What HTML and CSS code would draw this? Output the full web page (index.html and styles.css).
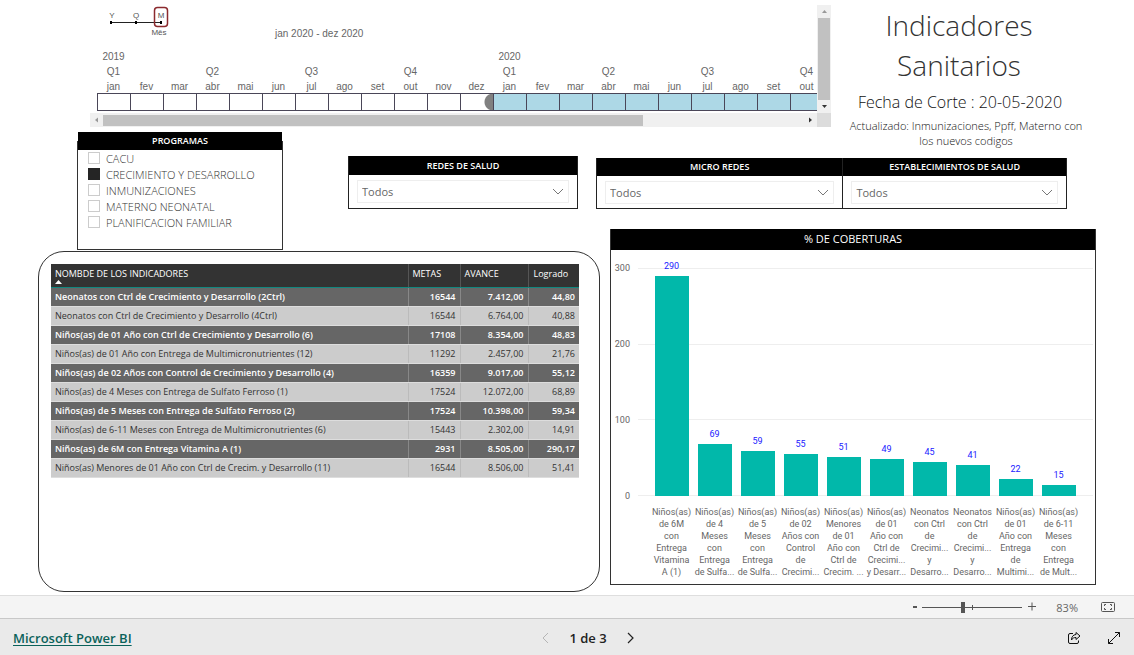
FILE: index.html
```html
<!DOCTYPE html>
<html lang="es">
<head>
<meta charset="utf-8">
<title>Indicadores Sanitarios</title>
<link rel="stylesheet" href="styles.css">
</head>
<body>
<main class="report">
  <section class="timeline">
    <div class="timeline-view">
      <div class="timeline-head">
        <svg class="granularity" width="70" height="36" viewBox="0 0 70 36">
          <path d="M14 17.5H64" stroke="#222" fill="none"/>
          <path d="M13 16h2v3h-2zM38 16h2v3h-2zM63 16h2v3h-2z" fill="#000"/>
          <text x="15" y="13" text-anchor="middle">Y</text>
          <text x="39" y="13" text-anchor="middle">Q</text>
          <text x="64" y="13" text-anchor="middle">M</text>
          <rect x="57.500" y="2.500" width="13" height="19" rx="3" fill="none" stroke="#8b2a2e" stroke-width="1.500"/>
          <text x="62" y="30" text-anchor="middle">Mês</text>
        </svg>
        <span class="range">jan 2020 - dez 2020</span>
      </div>
      <div class="months">
        <div class="month"><span>2019</span><span>Q1</span><span>jan</span><i></i></div>
        <div class="month"><span></span><span></span><span>fev</span><i></i></div>
        <div class="month"><span></span><span></span><span>mar</span><i></i></div>
        <div class="month"><span></span><span>Q2</span><span>abr</span><i></i></div>
        <div class="month"><span></span><span></span><span>mai</span><i></i></div>
        <div class="month"><span></span><span></span><span>jun</span><i></i></div>
        <div class="month"><span></span><span>Q3</span><span>jul</span><i></i></div>
        <div class="month"><span></span><span></span><span>ago</span><i></i></div>
        <div class="month"><span></span><span></span><span>set</span><i></i></div>
        <div class="month"><span></span><span>Q4</span><span>out</span><i></i></div>
        <div class="month"><span></span><span></span><span>nov</span><i></i></div>
        <div class="month"><span></span><span></span><span>dez</span><i class="handle"></i></div>
        <div class="month on"><span>2020</span><span>Q1</span><span>jan</span><i></i></div>
        <div class="month on"><span></span><span></span><span>fev</span><i></i></div>
        <div class="month on"><span></span><span></span><span>mar</span><i></i></div>
        <div class="month on"><span></span><span>Q2</span><span>abr</span><i></i></div>
        <div class="month on"><span></span><span></span><span>mai</span><i></i></div>
        <div class="month on"><span></span><span></span><span>jun</span><i></i></div>
        <div class="month on"><span></span><span>Q3</span><span>jul</span><i></i></div>
        <div class="month on"><span></span><span></span><span>ago</span><i></i></div>
        <div class="month on"><span></span><span></span><span>set</span><i></i></div>
        <div class="month on"><span></span><span>Q4</span><span>out</span><i></i></div>
      </div>
    </div>
    <div class="scroll-y">
      <svg width="13" height="13" viewBox="0 0 13 13"><path d="M4 8h5L6.500 5z" fill="#999"/></svg>
      <div class="thumb"></div>
      <svg width="13" height="13" viewBox="0 0 13 13"><path d="M4 5h5L6.500 8z" fill="#333"/></svg>
    </div>
    <div class="scroll-x">
      <svg width="13" height="14" viewBox="0 0 13 14"><path d="M8 4.500v5L5 7z" fill="#999"/></svg>
      <div class="track"><div class="thumb"></div></div>
      <svg width="13" height="14" viewBox="0 0 13 14"><path d="M5 4.500v5L8 7z" fill="#333"/></svg>
    </div>
    <div class="corner"></div>
  </section>

  <header class="heading">
    <h1>Indicadores<br>Sanitarios</h1>
    <p class="cut">Fecha de Corte : 20-05-2020</p>
    <p class="updated">Actualizado: Inmunizaciones, Ppff, Materno con<br>los nuevos codigos</p>
  </header>

  <fieldset class="programs">
    <legend class="bar">PROGRAMAS</legend>
    <label><input type="checkbox">CACU</label>
    <label><input type="checkbox" checked>CRECIMIENTO Y DESARROLLO</label>
    <label><input type="checkbox">INMUNIZACIONES</label>
    <label><input type="checkbox">MATERNO NEONATAL</label>
    <label><input type="checkbox">PLANIFICACION FAMILIAR</label>
  </fieldset>

  <div class="slicer redes">
    <label class="bar" for="redes">REDES DE SALUD</label>
    <div class="pick">
      <select id="redes"><option>Todos</option></select>
      <svg width="12" height="8" viewBox="0 0 12 8"><path d="M1 1l5 5 5-5" fill="none" stroke="#777"/></svg>
    </div>
  </div>
  <div class="pair">
    <div class="slicer micro">
      <label class="bar" for="micro">MICRO REDES</label>
      <div class="pick">
        <select id="micro"><option>Todos</option></select>
        <svg width="12" height="8" viewBox="0 0 12 8"><path d="M1 1l5 5 5-5" fill="none" stroke="#777"/></svg>
      </div>
    </div>
    <div class="slicer estab">
      <label class="bar" for="estab">ESTABLECIMIENTOS DE SALUD</label>
      <div class="pick">
        <select id="estab"><option>Todos</option></select>
        <svg width="12" height="8" viewBox="0 0 12 8"><path d="M1 1l5 5 5-5" fill="none" stroke="#777"/></svg>
      </div>
    </div>
  </div>

  <section class="card">
    <table>
      <colgroup><col><col class="c-metas"><col class="c-avance"><col class="c-logrado"></colgroup>
      <thead>
        <tr>
          <th>NOMBDE DE LOS INDICADORES<svg class="sort" width="8" height="4" viewBox="0 0 8 4"><path d="M0 4h7L3.500 0z" fill="#fff"/></svg></th>
          <th>METAS</th><th>AVANCE</th><th>Logrado</th>
        </tr>
      </thead>
      <tbody>
        <tr><td>Neonatos con Ctrl de Crecimiento y Desarrollo (2Ctrl)</td><td>16544</td><td>7.412,00</td><td>44,80</td></tr>
        <tr><td>Neonatos con Ctrl de Crecimiento y Desarrollo (4Ctrl)</td><td>16544</td><td>6.764,00</td><td>40,88</td></tr>
        <tr><td>Niños(as) de 01 Año con Ctrl de Crecimiento y Desarrollo (6)</td><td>17108</td><td>8.354,00</td><td>48,83</td></tr>
        <tr><td>Niños(as) de 01 Año con Entrega de Multimicronutrientes (12)</td><td>11292</td><td>2.457,00</td><td>21,76</td></tr>
        <tr><td>Niños(as) de 02 Años con Control de Crecimiento y Desarrollo (4)</td><td>16359</td><td>9.017,00</td><td>55,12</td></tr>
        <tr><td>Niños(as) de 4 Meses con Entrega de Sulfato Ferroso (1)</td><td>17524</td><td>12.072,00</td><td>68,89</td></tr>
        <tr><td>Niños(as) de 5 Meses con Entrega de Sulfato Ferroso (2)</td><td>17524</td><td>10.398,00</td><td>59,34</td></tr>
        <tr><td>Niños(as) de 6-11 Meses con Entrega de Multimicronutrientes (6)</td><td>15443</td><td>2.302,00</td><td>14,91</td></tr>
        <tr><td>Niños(as) de 6M con Entrega Vitamina A (1)</td><td>2931</td><td>8.505,00</td><td>290,17</td></tr>
        <tr><td>Niños(as) Menores de 01 Año con Ctrl de Crecim. y Desarrollo (11)</td><td>16544</td><td>8.506,00</td><td>51,41</td></tr>
      </tbody>
    </table>
  </section>

  <section class="chart">
    <h2 class="bar">% DE COBERTURAS</h2>
    <div class="chart-body">
      <div class="axis"><span>300</span><span>200</span><span>100</span><span>0</span></div>
      <div class="grid-lines"><i></i><i></i><i></i></div>
      <div class="bars">
        <div class="col"><b>290</b><i style="height:96.7%"></i></div>
        <div class="col"><b>69</b><i style="height:23%"></i></div>
        <div class="col"><b>59</b><i style="height:19.8%"></i></div>
        <div class="col"><b>55</b><i style="height:18.4%"></i></div>
        <div class="col"><b>51</b><i style="height:17.1%"></i></div>
        <div class="col"><b>49</b><i style="height:16.3%"></i></div>
        <div class="col"><b>45</b><i style="height:14.9%"></i></div>
        <div class="col"><b>41</b><i style="height:13.6%"></i></div>
        <div class="col"><b>22</b><i style="height:7.3%"></i></div>
        <div class="col"><b>15</b><i style="height:5%"></i></div>
      </div>
      <div class="names">
        <span>Niños(as)<br>de 6M<br>con<br>Entrega<br>Vitamina<br>A (1)</span>
        <span>Niños(as)<br>de 4<br>Meses<br>con<br>Entrega<br>de Sulfa...</span>
        <span>Niños(as)<br>de 5<br>Meses<br>con<br>Entrega<br>de Sulfa...</span>
        <span>Niños(as)<br>de 02<br>Años con<br>Control<br>de<br>Crecimi...</span>
        <span>Niños(as)<br>Menores<br>de 01<br>Año con<br>Ctrl de<br>Crecim. ...</span>
        <span>Niños(as)<br>de 01<br>Año con<br>Ctrl de<br>Crecimi...<br>y Desarr...</span>
        <span>Neonatos<br>con Ctrl<br>de<br>Crecimi...<br>y<br>Desarro...</span>
        <span>Neonatos<br>con Ctrl<br>de<br>Crecimi...<br>y<br>Desarro...</span>
        <span>Niños(as)<br>de 01<br>Año con<br>Entrega<br>de<br>Multimi...</span>
        <span>Niños(as)<br>de 6-11<br>Meses<br>con<br>Entrega<br>de Mult...</span>
      </div>
    </div>
  </section>
</main>

<div class="zoom-bar">
  <button type="button" aria-label="Alejar"><svg width="6" height="12" viewBox="0 0 6 12"><path d="M1 6h4" stroke="#555" stroke-width="2"/></svg></button>
  <input type="range" min="10" max="150" value="67" aria-label="Zoom">
  <button type="button" aria-label="Acercar"><svg width="8" height="12" viewBox="0 0 8 12"><path d="M0 5.500h8M4 1.500v8" stroke="#555"/></svg></button>
  <span class="percent">83%</span>
  <button type="button" aria-label="Ajustar a la página"><svg width="14" height="10" viewBox="0 0 14 10" fill="none" stroke="#555"><rect x=".5" y=".5" width="13" height="9" rx="1"/><path d="M3.500 4V2.500H5M9 2.500h1.500V4M10.500 6v1.500H9M5 7.500H3.500V6"/></svg></button>
</div>

<footer class="footer">
  <a href="#">Microsoft Power BI</a>
  <nav class="pager">
    <button type="button" aria-label="Anterior" disabled><svg width="7" height="12" viewBox="0 0 7 12"><path d="M6 1L1 6l5 5" fill="none" stroke="#b5b5b5"/></svg></button>
    <span>1 de 3</span>
    <button type="button" aria-label="Siguiente"><svg width="7" height="12" viewBox="0 0 7 12"><path d="M1 1l5 5-5 5" fill="none" stroke="#222" stroke-width="1.200"/></svg></button>
  </nav>
  <div class="actions">
    <button type="button" aria-label="Compartir"><svg width="14" height="14" viewBox="0 0 14 14" fill="none" stroke="#111" stroke-linejoin="round"><path d="M6 2.500H3A1.500 1.500 0 0 0 1.500 4v7A1.500 1.500 0 0 0 3 12.500h7a1.500 1.500 0 0 0 1.500-1.500V9.500"/><path d="M9 1.500l4 3.500-4 3.500V6.500C7 6.500 5.500 7 4.500 9 4.500 6 6 3.700 9 3.500z"/></svg></button>
    <button type="button" aria-label="Pantalla completa"><svg width="14" height="14" viewBox="0 0 14 14" fill="none" stroke="#111"><path d="M1.500 12.500l11-11M8 1.500h4.500V6M1.500 8v4.500H6"/></svg></button>
  </div>
</footer>
</body>
</html>
```
FILE: styles.css
```css
* { box-sizing: border-box; }

body {
  margin: 0;
  min-height: 100vh;
  display: flex;
  flex-direction: column;
  background: #fff;
  color: #333;
  font-family: "Open Sans", "Noto Sans", sans-serif;
  font-size: 9px;
}

h1, h2, p { margin: 0; font-weight: 400; }
button { border: 0; padding: 0; background: none; display: flex; align-items: center; }
svg { display: block; }

.report {
  flex: 1;
  display: grid;
  grid-template-columns: 310fr 248fr 244fr 256fr;
  grid-template-rows: 132px 24px 73px 22px 1fr;
  padding: 0 38px;
}

.bar {
  display: block;
  height: 18px;
  line-height: 18px;
  background: #000;
  color: #fff;
  text-align: center;
}

/* Timeline */
.timeline {
  grid-area: 1 / 1 / 2 / 4;
  display: grid;
  grid-template-columns: minmax(0, 1fr) 14px;
  grid-template-rows: 108px 14px;
  margin: 5px 9px 0 52px;
  font-family: "Liberation Sans", Arial, sans-serif;
  font-size: 10px;
  color: #666;
}
.timeline-view { overflow: hidden; padding-left: 7px; }
.timeline-head { display: flex; height: 43px; }
.granularity { overflow: visible; font-size: 8px; fill: #555; }
.range { margin: 23px 0 0 108px; line-height: 12px; }
.months { display: flex; }
.month { flex: 0 0 33px; text-align: center; }
.month span { display: block; height: 15px; line-height: 17px; }
.month i {
  display: block;
  height: 18px;
  border: 1px solid #4a4658;
  border-right: 0;
}
.month.on i { background: #add8e6; }
.month .handle { background: radial-gradient(circle at 100% 50%, #808080 8px, transparent 9px); }
.scroll-y, .scroll-x { background: #f0f0f0; display: flex; }
.scroll-y { flex-direction: column; padding: 0 1px; }
.scroll-y .thumb { flex: 1; background: #c1c1c1; }
.scroll-x .track { flex: 1; padding: 2px 0 1px; }
.scroll-x .thumb { width: 77%; height: 11px; background: #c1c1c1; }
.corner { background: #dcdcdc; }

/* Heading */
.heading { grid-area: 1 / 4 / 3 / 5; text-align: center; white-space: nowrap; }
.heading h1 { padding: 5px 18px 0 0; font-size: 28px; line-height: 40px; font-weight: 300; }
.heading .cut { padding: 5px 16px 0 0; font-size: 16px; line-height: 24px; font-weight: 300; color: #111; }
.heading .updated { padding: 4px 4px 0 0; font-size: 11px; line-height: 15px; font-weight: 300; color: #111; }

/* Slicers */
.programs {
  grid-area: 2 / 1 / 5 / 2;
  display: flex;
  flex-direction: column;
  margin: 0 65px 1px 39px;
  padding: 0;
  border: 1px solid #333;
  border-top: 0;
  font-size: 11px;
  font-weight: 300;
  color: #333;
}
.programs .bar { width: 100%; padding: 0; font-size: 9px; font-weight: 600; }
.programs label { display: flex; align-items: center; gap: 6px; height: 16px; padding-left: 10px; white-space: nowrap; }
.programs input { appearance: none; width: 12px; height: 12px; margin: 0; border: 1px solid #ccc; background: #fff; }
.programs input:checked { background: #252525; border-color: #252525; }

.slicer { border: 1px solid #222; border-top: 0; font-weight: 600; }
.redes { grid-area: 3 / 2 / 4 / 3; height: 53px; margin: 0 18px 0 0; }
.redes .bar { height: 19px; line-height: 19px; }
.pair { grid-area: 3 / 3 / 4 / 5; display: flex; margin: 2px 29px 0 0; height: 51px; }
.micro { flex: 247; }
.estab { flex: 224; border-left: 0; }
.pick {
  display: flex;
  align-items: center;
  height: 23px;
  margin: 5px 8px;
  padding-right: 4px;
  border: 1px solid #eee;
}
.pick select {
  flex: 1;
  appearance: none;
  border: 0;
  padding: 0 4px;
  background: transparent;
  font: 11px "Open Sans", "Noto Sans", sans-serif;
  color: #666;
}

/* Indicator table */
.card {
  grid-area: 5 / 1 / 6 / 3;
  margin: 0 -4px 3px 0;
  padding: 12px 20px 12px 12px;
  border: 1px solid #333;
  border-radius: 26px;
}
table { width: 100%; border-collapse: collapse; table-layout: fixed; }
.c-metas { width: 52px; }
.c-avance { width: 68px; }
.c-logrado { width: 51px; }
th, td { padding: 0 4px; white-space: nowrap; }
th {
  height: 23px;
  line-height: 12px;
  padding-top: 4px;
  vertical-align: top;
  text-align: left;
  background: #333;
  color: #fff;
  font-weight: 500;
  border-bottom: 1px solid #11877f;
}
th:last-child { padding-left: 5px; }
td { height: 19px; line-height: 18px; text-align: right; border-bottom: 1px solid #ddd; }
td:first-child { text-align: left; }
th + th, td + td { border-left: 1px solid #bbb; }
th + th { border-left-color: #555; }
tbody tr:nth-child(odd) { background: #666; color: #fff; font-weight: 600; }
tbody tr:nth-child(odd) td + td { border-left-color: #888; }
tbody tr:nth-child(even) { background: #ccc; }

/* Column chart */
.chart {
  grid-area: 4 / 3 / 6 / 5;
  display: flex;
  flex-direction: column;
  margin: 0 0 10px 14px;
  border: 1px solid #333;
  border-top: 0;
}
.chart .bar { height: 21px; line-height: 20px; font-size: 11px; }
.chart-body {
  flex: 1;
  display: grid;
  grid-template-columns: 27px 1fr;
  grid-template-rows: 1fr 87px;
  padding: 18px 2px 1px 0;
  color: #666;
  font-family: Roboto, "Open Sans", sans-serif;
}
.axis {
  grid-area: 1 / 1;
  display: flex;
  flex-direction: column;
  justify-content: space-between;
  margin: -6px 0;
  padding-right: 8px;
  line-height: 12px;
  text-align: right;
}
.grid-lines { grid-area: 1 / 2; display: flex; flex-direction: column; border-bottom: 1px solid #eee; }
.grid-lines i { flex: 1; border-top: 1px solid #eee; }
.bars, .names { display: grid; grid-template-columns: repeat(10, 1fr); padding: 0 13px 0 12px; }
.bars { grid-area: 1 / 2; }
.col { display: flex; flex-direction: column; justify-content: flex-end; align-items: center; min-height: 0; }
.col b { line-height: 10px; margin: -10px 0 5px; font-weight: 400; color: #1a1aff; }
.col i { flex: none; width: 34px; background: #01b8aa; }
.names { grid-area: 2 / 2; padding-top: 10px; line-height: 12px; text-align: center; white-space: nowrap; }

/* Zoom strip and footer */
.zoom-bar {
  display: flex;
  align-items: center;
  justify-content: flex-end;
  height: 24px;
  padding-right: 19px;
  border-top: 1px solid #dedede;
  border-bottom: 1px solid #c8c8c8;
  background: #f4f4f4;
  color: #666;
}
.zoom-bar input {
  appearance: none;
  width: 100px;
  height: 12px;
  margin: 0 6px 0 4px;
  background:
    linear-gradient(#555, #555) 50px 4px / 1px 5px no-repeat,
    linear-gradient(#555, #555) 0 6px / 100% 1px no-repeat;
}
.zoom-bar input::-webkit-slider-thumb { appearance: none; width: 4px; height: 11px; background: #555; }
.percent { margin: 0 23px 0 20px; font-size: 11px; }

.footer {
  display: grid;
  grid-template-columns: 1fr auto 1fr;
  align-items: center;
  height: 36px;
  padding: 2px 13px 0;
  background: #eaeaea;
}
.footer a { font-size: 13px; font-weight: 600; color: #0b625a; text-underline-offset: 2px; }
.pager { display: flex; align-items: center; gap: 20px; margin-left: 42px; font-size: 13px; font-weight: 600; color: #222; }
.actions { display: flex; gap: 26px; justify-content: flex-end; }
```
